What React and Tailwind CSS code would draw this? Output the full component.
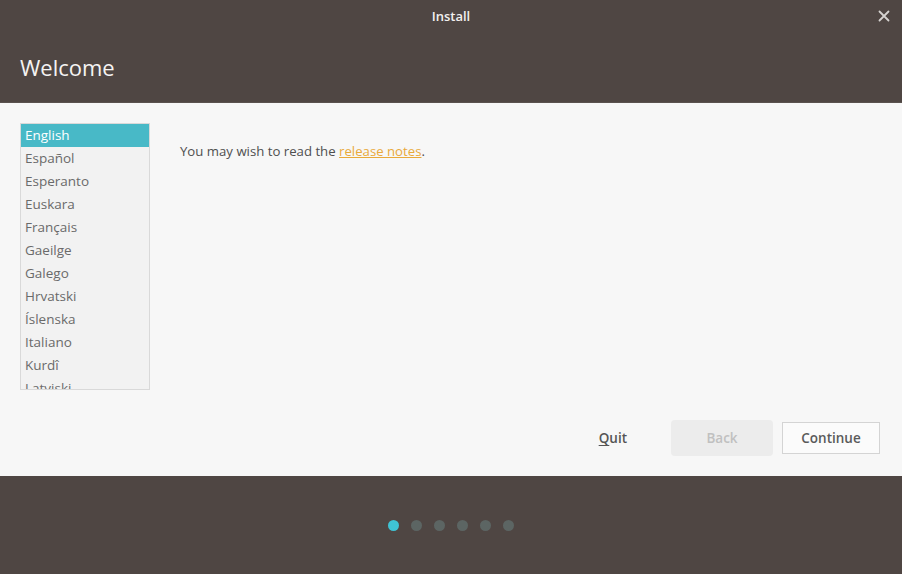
const languages = [
  'English',
  'Español',
  'Esperanto',
  'Euskara',
  'Français',
  'Gaeilge',
  'Galego',
  'Hrvatski',
  'Íslenska',
  'Italiano',
  'Kurdî',
  'Latviski',
];

export default function App() {
  return (
    <div
      className="flex h-[574px] w-[902px] flex-col overflow-hidden bg-[#4f4643]"
      style={{ fontFamily: '"Open Sans", "Noto Sans", sans-serif' }}
    >
      {/* header */}
      <div className="flex h-[103px] shrink-0 flex-col border-b border-[#5a524f] bg-[#4f4643]">
        <div className="relative flex h-[33px] items-center justify-center">
          <span className="text-[13px] font-semibold text-[#f2f0ef]">Install</span>
          <button type="button" className="absolute right-[11px] top-[9px] text-[#d6d3d1]">
            <svg width="14" height="14" viewBox="0 0 14 14">
              <path d="M2.5 2.5 L11.5 11.5 M11.5 2.5 L2.5 11.5" stroke="currentColor" strokeWidth="1.8" strokeLinecap="round" />
            </svg>
          </button>
        </div>
        <h1 className="mt-[19px] pl-[20px] text-[22px] leading-[30px] text-[#f5f3f2]">Welcome</h1>
      </div>

      {/* body */}
      <div className="flex h-[373px] shrink-0 flex-col bg-[#f7f7f7]">
        <div className="flex flex-1 pl-[20px] pt-[20px]">
          <div className="h-[267px] w-[130px] overflow-hidden border border-[#d9d9d9] bg-[#f2f2f2]">
            <ul className="flex flex-col">
              {languages.map((l, i) => (
                <li
                  key={l}
                  className={
                    i === 0
                      ? 'h-[23px] bg-[#48b9c7] pl-[4px] text-[13.5px] leading-[23px] text-white'
                      : 'h-[23px] pl-[4px] text-[13.5px] leading-[23px] text-[#6a6a6a]'
                  }
                >
                  {l}
                </li>
              ))}
            </ul>
          </div>
          <p className="ml-[30px] mt-[18px] text-[13.2px] leading-[20px] text-[#4f4f4f]">
            You may wish to read the{' '}
            <a href="#" className="text-[#e9a93a] underline">
              release notes
            </a>
            .
          </p>
        </div>
        <div className="flex items-center justify-end gap-[9px] pb-[20px] pr-[22px]">
          <button type="button" className="mr-[35px] text-[13.5px] font-semibold text-[#555]">
            <span className="underline decoration-[#555] underline-offset-2">Q</span>uit
          </button>
          <button
            type="button"
            className="h-[36px] w-[102px] rounded-[4px] bg-[#ececec] text-[13.5px] font-semibold text-[#c0c0c0]"
          >
            Back
          </button>
          <button
            type="button"
            className="h-[32px] w-[98px] border border-[#d4d4d4] bg-[#fbfbfb] text-[13.5px] font-semibold text-[#5a5a5a]"
          >
            Continue
          </button>
        </div>
      </div>

      {/* footer */}
      <div className="flex flex-1 items-center justify-center gap-[12px] pr-[1px]">
        <span className="h-[11px] w-[11px] rounded-full bg-[#3fc3d4]" />
        {[0, 1, 2, 3, 4].map((i) => (
          <span key={i} className="h-[11px] w-[11px] rounded-full bg-[#5c6563]" />
        ))}
      </div>
    </div>
  );
}
